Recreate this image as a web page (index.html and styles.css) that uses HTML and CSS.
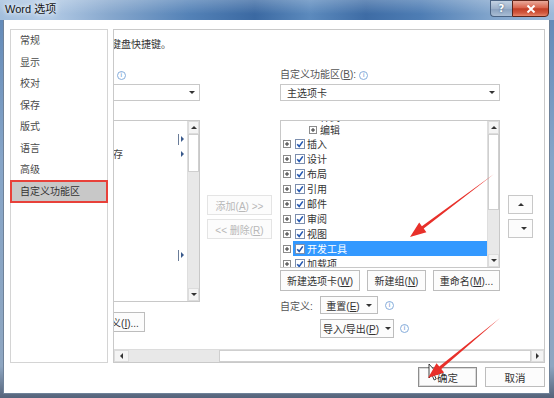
FILE: index.html
```html
<!DOCTYPE html>
<html lang="zh-CN">
<head>
<meta charset="utf-8">
<title>Word 选项</title>
<link rel="stylesheet" href="styles.css">
</head>
<body>
<svg class="defs" aria-hidden="true">
  <symbol id="plus" viewBox="0 0 8 8"><rect x="0.5" y="0.5" width="7" height="7" fill="#fff" stroke="#8c8c8c"/><path d="M2 4h4M4 2v4" stroke="#333" stroke-width="1"/></symbol>
  <symbol id="minus" viewBox="0 0 8 8"><rect x="0.5" y="0.5" width="7" height="7" fill="#fff" stroke="#8c8c8c"/><path d="M2 4h4" stroke="#333" stroke-width="1"/></symbol>
  <symbol id="check" viewBox="0 0 10 10"><rect x="0.5" y="0.5" width="9" height="9" fill="#fff" stroke="#7d8fae"/><path d="M2.2 5.2l2 2.2 3.6-5" fill="none" stroke="#2457b0" stroke-width="1.6"/></symbol>
</svg>

<div class="window">
  <div class="titlebar">
    <span class="title">Word 选项</span>
    <div class="caption">
      <span class="cap-help">?</span>
      <span class="cap-close"><svg width="10" height="8" viewBox="0 0 10 8"><path d="M1.5 0.5l7 7M8.5 0.5l-7 7" stroke="#fff" stroke-width="2"/></svg></span>
    </div>
  </div>

  <div class="client">
    <div class="main">
      <ul class="nav">
        <li>常规</li>
        <li>显示</li>
        <li>校对</li>
        <li>保存</li>
        <li>版式</li>
        <li>语言</li>
        <li>高级</li>
        <li class="on">自定义功能区</li>
      </ul>

      <div class="panel">
        <div class="viewport">
          <div class="canvas">
            <p class="heading">自定义功能区和键盘快捷键。</p>
            <div class="columns">

              <!-- 左侧：命令列表（被横向滚动裁掉一部分） -->
              <div class="col-left">
                <div class="label"><span>从下列位置选择命令(<u>C</u>):</span><span class="info">i</span></div>
                <div class="select"><span>常用命令</span><i class="tri-d"></i></div>
                <div class="listbox lb-left">
                  <div class="items">
                    <div class="cmd"><span class="name"></span><i class="split"></i><i class="tri-r"></i></div>
                    <div class="cmd"><span class="name">保存</span><i class="tri-r"></i></div>
                    <div class="cmd"><span class="name"></span></div>
                    <div class="cmd"><span class="name"></span></div>
                    <div class="cmd"><span class="name"></span></div>
                    <div class="cmd"><span class="name"></span></div>
                    <div class="cmd"><span class="name"></span></div>
                    <div class="cmd"><span class="name"></span></div>
                    <div class="cmd"><span class="name"></span><i class="split"></i><i class="tri-r"></i></div>
                    <div class="cmd"><span class="name"></span></div>
                    <div class="cmd"><span class="name"></span></div>
                  </div>
                  <div class="vscroll">
                    <span class="vs-btn"><i class="tri-u"></i></span>
                    <span class="vs-thumb short"></span>
                    <span class="vs-track"></span>
                    <span class="vs-btn"><i class="tri-d"></i></span>
                  </div>
                </div>
                <div class="kbd-row"><span class="kbd-label">键盘快捷方式:</span><span class="btn kbd-btn"><span>自定义(<u>I</u>)...</span></span></div>
              </div>

              <!-- 中间：添加 / 删除 -->
              <div class="col-mid">
                <span class="btn off"><span>添加(<u>A</u>) &gt;&gt;</span></span>
                <span class="btn off"><span>&lt;&lt; 删除(<u>R</u>)</span></span>
              </div>

              <!-- 右侧：功能区树 -->
              <div class="col-right">
                <div class="label"><span>自定义功能区(<u>B</u>):</span><span class="info">i</span></div>
                <div class="select"><span>主选项卡</span><i class="tri-d"></i></div>
                <div class="listbox lb-right">
                  <div class="items">
                    <div class="tree">
                      <div class="row sub"><svg class="exp"><use href="#minus"/></svg><span class="txt">样式</span></div>
                      <div class="row sub"><svg class="exp"><use href="#plus"/></svg><span class="txt">编辑</span></div>
                      <div class="row"><svg class="exp"><use href="#plus"/></svg><span class="cell"><svg class="chk"><use href="#check"/></svg><span class="txt">插入</span></span></div>
                      <div class="row"><svg class="exp"><use href="#plus"/></svg><span class="cell"><svg class="chk"><use href="#check"/></svg><span class="txt">设计</span></span></div>
                      <div class="row"><svg class="exp"><use href="#plus"/></svg><span class="cell"><svg class="chk"><use href="#check"/></svg><span class="txt">布局</span></span></div>
                      <div class="row"><svg class="exp"><use href="#plus"/></svg><span class="cell"><svg class="chk"><use href="#check"/></svg><span class="txt">引用</span></span></div>
                      <div class="row"><svg class="exp"><use href="#plus"/></svg><span class="cell"><svg class="chk"><use href="#check"/></svg><span class="txt">邮件</span></span></div>
                      <div class="row"><svg class="exp"><use href="#plus"/></svg><span class="cell"><svg class="chk"><use href="#check"/></svg><span class="txt">审阅</span></span></div>
                      <div class="row"><svg class="exp"><use href="#plus"/></svg><span class="cell"><svg class="chk"><use href="#check"/></svg><span class="txt">视图</span></span></div>
                      <div class="row sel"><svg class="exp"><use href="#plus"/></svg><span class="cell"><svg class="chk"><use href="#check"/></svg><span class="txt">开发工具</span></span></div>
                      <div class="row"><svg class="exp"><use href="#plus"/></svg><span class="cell"><svg class="chk"><use href="#check"/></svg><span class="txt">加载项</span></span></div>
                    </div>
                  </div>
                  <div class="vscroll">
                    <span class="vs-btn"><i class="tri-u"></i></span>
                    <span class="vs-thumb long"></span>
                    <span class="vs-track"></span>
                    <span class="vs-btn"><i class="tri-d"></i></span>
                  </div>
                </div>
                <div class="btn-row">
                  <span class="btn w-tab"><span>新建选项卡(<u>W</u>)</span></span>
                  <span class="btn w-grp"><span>新建组(<u>N</u>)</span></span>
                  <span class="btn w-ren"><span>重命名(<u>M</u>)...</span></span>
                </div>
                <div class="custom-row">
                  <span class="custom-label">自定义:</span>
                  <span class="btn w-reset"><span>重置(<u>E</u>)</span><i class="tri-d"></i></span>
                  <span class="info">i</span>
                </div>
                <div class="custom-row import">
                  <span class="btn w-imp"><span>导入/导出(<u>P</u>)</span><i class="tri-d"></i></span>
                  <span class="info">i</span>
                </div>
              </div>

              <!-- 上移 / 下移 -->
              <div class="col-move">
                <span class="btn move"><i class="tri-u"></i></span>
                <span class="btn move"><i class="tri-d"></i></span>
              </div>

            </div>
          </div>
        </div>
        <div class="hscroll">
          <span class="hs-btn"><i class="tri-l"></i></span>
          <span class="hs-thumb"></span>
          <span class="hs-btn end"><i class="tri-r"></i></span>
        </div>
      </div>
    </div>

    <div class="footer">
      <span class="btn ok">确定</span>
      <span class="btn cancel">取消</span>
    </div>
  </div>

  <svg class="marks" width="554" height="398" viewBox="0 0 554 398">
    <path d="M429 364v14l3-3 2.2 5 2-1-2.2-4.8h4z" fill="#fff" stroke="#111" stroke-width="0.8"/>
    <polygon points="494,174 421.9,226.2 419.2,222.6 410,237 426.4,232.2 423.7,228.6" fill="#e8302a"/>
    <polygon points="500,318 439.3,366.6 436.5,363.2 428,378 444.1,372.4 441.3,369" fill="#e8302a"/>
  </svg>
</div>
</body>
</html>
```

FILE: styles.css
```css
* { margin: 0; padding: 0; box-sizing: border-box; }
body { width: 554px; height: 398px; overflow: hidden; font-family: "Liberation Sans", "Noto Sans CJK SC", sans-serif; font-size: 10px; color: #444; }
u { text-decoration: underline; }
i { font-style: normal; display: block; }
.defs { position: absolute; width: 0; height: 0; }

/* 窗口外框 */
.window { position: relative; width: 554px; height: 398px; display: flex; flex-direction: column; background: linear-gradient(to bottom, #5f87b6 0, #86a5c8 40%, #8ea6c1 92%, #55637a 100%); }
.titlebar { height: 20px; display: flex; align-items: flex-start; background: linear-gradient(to bottom, rgba(255,255,255,.22), rgba(255,255,255,0) 70%), linear-gradient(to right, #a3bfdd 0%, #b2cae5 9%, #86a7cd 20%, #5482b7 34%, #3b69a2 46%, #5c8abd 56%, #3e6ca5 66%, #4e7db4 76%, #7fa3cb 88%, #9cb9da 100%); }
.title { padding-left: 5px; line-height: 19px; font-size: 11px; color: #151515; text-shadow: 0 0 4px #fff, 0 0 7px #eaf2fb; }
.caption { margin-left: auto; margin-right: 5px; display: flex; height: 17px; }
.cap-help { width: 22px; height: 17px; border: 1px solid #4a6383; border-right: 0; border-radius: 0 0 0 4px; background: linear-gradient(to bottom, #c3d2e3, #9cb1ca 50%, #879fbd 51%, #a9bdd4); color: #fff; font: bold 10px/15px "DejaVu Sans", sans-serif; text-align: center; text-shadow: 0 0 2px #33506f; }
.cap-close { width: 37px; height: 17px; border: 1px solid #5d2419; border-radius: 0 0 4px 0; background: linear-gradient(to bottom, #e9a99a, #d9654d 45%, #c23e26 52%, #d2593f 80%, #e7866c); display: flex; align-items: center; justify-content: center; }

/* 客户区 */
.client { flex: 1; min-height: 0; margin: 0 4px 4px 3px; border: 1px solid #6f8299; border-top: 0; background: #fff; display: flex; flex-direction: column; padding: 9px 4px 0 6px; }
.main { display: flex; gap: 5px; height: 334px; }

.nav { flex: none; width: 98px; border: 1px solid #d4d4d4; list-style: none; }
.nav li { height: 21.5px; line-height: 21.5px; padding-left: 9px; color: #4a4a4a; white-space: nowrap; }
.nav li.on { background: #c8c8c8; outline: 2px solid #e8413a; outline-offset: -1px; color: #333; }

.panel { flex: 1; min-width: 0; border: 1px solid #c9c9c9; display: flex; flex-direction: column; }
.viewport { flex: 1; overflow: hidden; }
.canvas { margin-left: -107px; width: 640px; }
.heading { padding: 8px 0 0 34px; line-height: 14px; white-space: nowrap; color: #333; }
.columns { display: flex; align-items: flex-start; margin-top: 16px; }

.label { height: 14px; line-height: 14px; display: flex; align-items: center; white-space: nowrap; color: #555; }
.info { display: inline-flex; align-items: center; justify-content: center; width: 9px; height: 9px; margin-left: 3px; border: 1px solid #86addb; border-radius: 50%; font: 7px/1 "DejaVu Sans", sans-serif; color: #5f92cf; }
.select { margin-top: 2px; height: 17px; border: 1px solid #c8c8c8; display: flex; align-items: center; padding: 0 4px 0 6px; color: #333; }
.select .tri-d { margin-left: auto; }
.listbox { margin-top: 19px; border: 1px solid #c8c8c8; display: flex; }
.items { flex: 1; min-width: 0; overflow: hidden; }

/* 三角形 */
.tri-d { width: 0; height: 0; border-left: 3px solid transparent; border-right: 3px solid transparent; border-top: 3px solid #333; }
.tri-u { width: 0; height: 0; border-left: 3px solid transparent; border-right: 3px solid transparent; border-bottom: 3px solid #333; }
.tri-r { width: 0; height: 0; border-top: 3px solid transparent; border-bottom: 3px solid transparent; border-left: 3px solid #3a5a8c; }
.tri-l { width: 0; height: 0; border-top: 3px solid transparent; border-bottom: 3px solid transparent; border-right: 3px solid #333; }

/* 竖向滚动条 */
.vscroll { flex: none; width: 12px; display: flex; flex-direction: column; background: #e8e8e8; border-left: 1px solid #dedede; }
.vs-btn { height: 13px; display: flex; align-items: center; justify-content: center; background: #f4f4f4; border: 1px solid #dcdcdc; }
.vs-thumb { background: #fff; border: 1px solid #cfcfcf; }
.vs-thumb.short { height: 38px; }
.vs-thumb.long { height: 76px; }
.vs-track { flex: 1; }

/* 左列 */
.col-left { flex: none; width: 193px; }
.lb-left { height: 182px; }
.lb-left .items { padding-top: 11px; }
.cmd { height: 14.5px; display: flex; align-items: center; padding: 0 3px 0 95px; }
.cmd .name { flex: 1; color: #444; }
.cmd .split { width: 1px; height: 11px; background: #6b7d99; margin-right: 2px; }
.kbd-row { margin-top: 10px; display: flex; }
.kbd-label { width: 78px; line-height: 20px; white-space: nowrap; overflow: hidden; }
.kbd-btn { width: 60px; height: 20px; }

/* 按钮 */
.btn { display: flex; align-items: center; justify-content: center; border: 1px solid #bdbdbd; background: #fcfcfc; color: #333; white-space: nowrap; }
.btn .tri-d { margin-left: 6px; }
.btn.off { height: 20px; border-color: #e4e4e4; color: #b8b8b8; }
.btn.off + .btn.off { margin-top: 4px; }

.col-mid { flex: none; width: 65px; margin-left: 7px; padding-top: 127px; }

/* 右列 */
.col-right { flex: none; width: 220px; margin-left: 8px; }
.lb-right { height: 148px; }
.tree { margin-top: -11px; padding-left: 2px; }
.row { height: 15px; display: flex; align-items: center; color: #333; white-space: nowrap; }
.row.sub { height: 13px; padding-left: 26px; }
.row.sub .txt { margin-left: 3px; }
.exp { width: 8px; height: 8px; flex: none; }
.chk { width: 10px; height: 10px; flex: none; }
.cell { flex: 1; height: 15px; margin-left: 2px; padding-left: 2px; display: flex; align-items: center; }
.cell .txt { margin-left: 2px; }
.row.sel .cell { background: #3399ff; color: #fff; }

.btn-row { margin-top: 2px; display: flex; gap: 7px; }
.btn-row .btn { height: 21px; }
.w-tab { width: 80px; }
.w-grp { width: 59px; }
.w-ren { width: 67px; }
.custom-row { margin-top: 5px; display: flex; align-items: center; }
.custom-label { width: 40px; color: #555; }
.w-reset { width: 58px; height: 18px; }
.custom-row .info { margin-left: 7px; }
.import { padding-left: 40px; }
.w-imp { width: 74px; height: 19px; }
.import .info { margin-left: 6px; }

.col-move { flex: none; width: 25px; margin-left: 8px; padding-top: 127px; }
.btn.move { height: 19px; border-color: #c8c8c8; }
.btn.move + .btn.move { margin-top: 5px; }

/* 横向滚动条 */
.hscroll { flex: none; height: 13px; display: flex; background: #e8e8e8; border-top: 1px solid #dcdcdc; }
.hs-btn { width: 15px; display: flex; align-items: center; justify-content: center; background: #f4f4f4; border: 1px solid #dcdcdc; }
.hs-btn.end { width: auto; flex: 1; }
.hs-btn .tri-r { border-left-color: #333; }
.hs-thumb { flex: none; width: 312px; margin-left: 90px; background: #fff; border: 1px solid #cfcfcf; }

/* 底部按钮 */
.footer { margin-top: 4px; display: flex; justify-content: flex-end; gap: 8px; }
.footer .btn { height: 20px; font-size: 10.5px; }
.ok { width: 59px; border-color: #8e8e8e; box-shadow: inset 0 0 0 1px #dadada; }
.cancel { width: 60px; }

.marks { position: absolute; left: 0; top: 0; pointer-events: none; }
```
